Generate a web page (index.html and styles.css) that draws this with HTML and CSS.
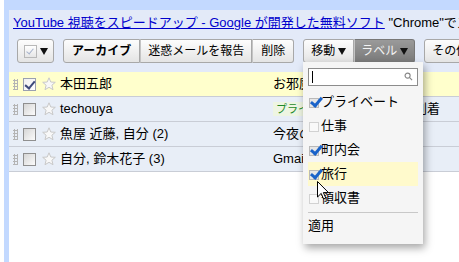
FILE: index.html
```html
<!DOCTYPE html>
<html lang="ja">
<head>
  <meta charset="UTF-8">
  <title>Gmail ラベル</title>
  <link rel="stylesheet" href="styles.css">
</head>
<body>
  <div class="page">
    <div class="main">
      <div class="promo">
        <a href="#">YouTube 視聴をスピードアップ - Google が開発した無料ソフト</a> "Chrome"でスピードアップ
      </div>

      <div class="toolbar">
        <div class="btn select"><span class="tick-box"></span><span class="caret"></span></div>
        <div class="group">
          <div class="btn first bold">アーカイブ</div>
          <div class="btn spam">迷惑メールを報告</div>
          <div class="btn last">削除</div>
        </div>
        <div class="group">
          <div class="btn first">移動<span class="caret"></span></div>
          <div class="btn last active">ラベル<span class="caret"></span></div>
        </div>
        <div class="btn first">その他の操作<span class="caret"></span></div>
      </div>

      <div class="list">
        <div class="row selected">
          <span class="handle"></span>
          <span class="cb checked"></span>
          <svg class="star" viewBox="0 0 14 14"><path d="M7 0.8 8.8 5 13.3 5.3 9.9 8.2 11 12.7 7 10.3 3 12.7 4.1 8.2 0.7 5.3 5.2 5Z"/></svg>
          <span class="sender">本田五郎</span>
          <span class="subject">お邪魔します</span>
        </div>
        <div class="row">
          <span class="handle"></span>
          <span class="cb"></span>
          <svg class="star" viewBox="0 0 14 14"><path d="M7 0.8 8.8 5 13.3 5.3 9.9 8.2 11 12.7 7 10.3 3 12.7 4.1 8.2 0.7 5.3 5.2 5Z"/></svg>
          <span class="sender">techouya</span>
          <span class="subject"><span class="chip">プライベート</span>ご注文商品到着</span>
        </div>
        <div class="row">
          <span class="handle"></span>
          <span class="cb"></span>
          <svg class="star" viewBox="0 0 14 14"><path d="M7 0.8 8.8 5 13.3 5.3 9.9 8.2 11 12.7 7 10.3 3 12.7 4.1 8.2 0.7 5.3 5.2 5Z"/></svg>
          <span class="sender">魚屋 近藤, 自分 (2)</span>
          <span class="subject">今夜のおすすめ</span>
        </div>
        <div class="row">
          <span class="handle"></span>
          <span class="cb"></span>
          <svg class="star" viewBox="0 0 14 14"><path d="M7 0.8 8.8 5 13.3 5.3 9.9 8.2 11 12.7 7 10.3 3 12.7 4.1 8.2 0.7 5.3 5.2 5Z"/></svg>
          <span class="sender">自分, 鈴木花子 (3)</span>
          <span class="subject">Gmail の使い方</span>
        </div>
      </div>
    </div>
  </div>

  <!-- ラベルのドロップダウン -->
  <div class="menu">
    <div class="search">
      <span class="text-cursor"></span>
      <svg class="glass" viewBox="0 0 10 10"><circle cx="4" cy="4" r="2.8"/><path d="M6 6 9 9"/></svg>
    </div>
    <div class="item"><span class="mark on"></span>プライベート</div>
    <div class="item"><span class="mark"></span>仕事</div>
    <div class="item"><span class="mark on"></span>町内会</div>
    <div class="item hover"><span class="mark on"></span>旅行</div>
    <div class="item"><span class="mark"></span>領収書</div>
    <div class="sep"></div>
    <div class="item apply">適用</div>
  </div>

  <svg class="pointer" viewBox="0 0 12 19"><path d="M0.5 0.5V16L4.2 12.4 6.6 18 8.8 17 6.4 11.6H11.5Z"/></svg>
</body>
</html>
```

FILE: styles.css
```css
body {
  margin: 0;
  height: 262px;
  overflow: hidden;
  background: #fff;
  font-family: 'Liberation Sans', 'Noto Sans CJK JP', sans-serif;
  font-size: 13px;
  color: #000;
}

.page {
  margin-left: 4px;
  height: 252px;
  padding: 10px 0 0 5px;
  background: #c3d9ff;
}

.main {
  height: 100%;
  background: #fff;
}

.promo {
  height: 19px;
  padding: 3px 0 0 4px;
  line-height: 19px;
  white-space: nowrap;
  overflow: hidden;
  background: #e3eaf8;
}

.promo a {
  color: #0000cc;
}

.toolbar {
  display: flex;
  gap: 9px;
  height: 24px;
  padding: 7px 0 9px 8px;
  white-space: nowrap;
  background: #e3eaf8;
}

.group {
  display: flex;
}

.btn {
  display: flex;
  flex: none;
  align-items: center;
  gap: 3px;
  box-sizing: border-box;
  height: 24px;
  padding: 0 7px;
  border: 1px solid #a8a8a8;
  border-radius: 3px;
  background: linear-gradient(#fdfdfd, #e4e4e4);
  font-size: 12px;
  line-height: 22px;
}

.group .btn { border-radius: 0; }
.group .btn + .btn { border-left-color: #c4c4c4; }
.group .first { border-radius: 3px 0 0 3px; }
.group .last { border-radius: 0 3px 3px 0; }
.btn.bold { font-weight: bold; padding: 0 8px; }
.btn.spam { padding: 0 7px; }
.btn.last { padding: 0 8px; }
.btn.select { padding: 0 5px 0 6px; gap: 3px; }

.btn.active {
  padding: 0 6px;
  border-color: #777;
  background: linear-gradient(#9a9a9a, #7a7a7a);
  color: #f4f4f4;
}

.caret {
  width: 0;
  height: 0;
  border-left: 4px solid transparent;
  border-right: 4px solid transparent;
  border-top: 7px solid #111;
}

.tick-box {
  width: 11px;
  height: 11px;
  border: 1px solid #b8b8b8;
  background: linear-gradient(#fff, #e6e6e6);
  position: relative;
}

.tick-box::after {
  content: "";
  position: absolute;
  left: 3px;
  top: 1px;
  width: 3px;
  height: 6px;
  border: solid #a7b3cc;
  border-width: 0 1.5px 1.5px 0;
  transform: rotate(40deg);
}

.row {
  display: flex;
  align-items: center;
  height: 24px;
  padding-left: 4px;
  border-bottom: 1px solid #c9cdd6;
  background: #e8eef7;
  white-space: nowrap;
  overflow: hidden;
}

.row > * { flex: none; }
.row.selected { background: #ffffcc; }

.handle {
  width: 5px;
  height: 11px;
  margin-right: 5px;
  background-image: radial-gradient(circle, #b4b4b4 1px, transparent 1.2px);
  background-size: 3px 3px;
}

.cb {
  position: relative;
  box-sizing: border-box;
  width: 13px;
  height: 13px;
  border: 1px solid #8f8f8f;
  background: linear-gradient(135deg, #d6d6d6, #fbfbfb);
}

.cb.checked {
  border-color: #9aa0b0;
  background: linear-gradient(135deg, #f0f0f0, #fff);
}

.cb.checked::after {
  content: "";
  position: absolute;
  left: 3px;
  top: 0;
  width: 4px;
  height: 8px;
  border: solid #3d4a7a;
  border-width: 0 2px 2px 0;
  transform: rotate(40deg);
}

.star {
  width: 14px;
  height: 14px;
  margin: 0 4px 0 6px;
  fill: #f8f8f8;
  stroke: #c8c8c8;
  stroke-width: 1;
}

.sender {
  width: 213px;
  line-height: 24px;
}

.subject {
  display: flex;
  align-items: center;
  line-height: 24px;
}

.chip {
  height: 14px;
  margin-right: 4px;
  padding: 0 3px;
  background: #eef5e2;
  color: #1f8a2a;
  font-size: 11px;
  line-height: 14px;
}

.menu {
  position: absolute;
  left: 303px;
  top: 62px;
  width: 120px;
  height: 182px;
  box-sizing: border-box;
  padding: 6px 5px 0;
  background: #f5f5f5;
  box-shadow: 2px 4px 8px rgba(0, 0, 0, 0.35);
}

.search {
  position: relative;
  box-sizing: border-box;
  height: 18px;
  margin-bottom: 4px;
  border: 1px solid #8c8c8c;
  background: #fff;
}

.text-cursor {
  position: absolute;
  left: 3px;
  top: 2px;
  width: 1px;
  height: 12px;
  background: #000;
}

.glass {
  position: absolute;
  right: 4px;
  top: 3px;
  width: 9px;
  height: 9px;
  fill: none;
  stroke: #888;
  stroke-width: 1.3;
}

.item {
  display: flex;
  align-items: center;
  gap: 2px;
  height: 24px;
  padding-left: 1px;
  line-height: 24px;
}

.item.hover { background: #fffacc; }
.item.apply { padding-left: 0; }

.mark {
  position: relative;
  box-sizing: border-box;
  width: 10px;
  height: 10px;
  margin-top: 2px;
  border: 1px solid #d2d2d2;
  background: #f9f9f9;
}

.mark.on {
  border-color: #b9b9b9;
  background: #e6e6e6;
}

.mark.on::after {
  content: "";
  position: absolute;
  left: 3px;
  top: -4px;
  width: 4px;
  height: 9px;
  border: solid #1a63c9;
  border-width: 0 3px 3px 0;
  transform: rotate(40deg);
}

.sep {
  height: 1px;
  margin: 2px 0 1px;
  background: #c8c8c8;
}

.pointer {
  position: absolute;
  left: 317px;
  top: 181px;
  width: 12px;
  height: 19px;
  fill: #fff;
  stroke: #000;
  stroke-width: 1;
}
```
